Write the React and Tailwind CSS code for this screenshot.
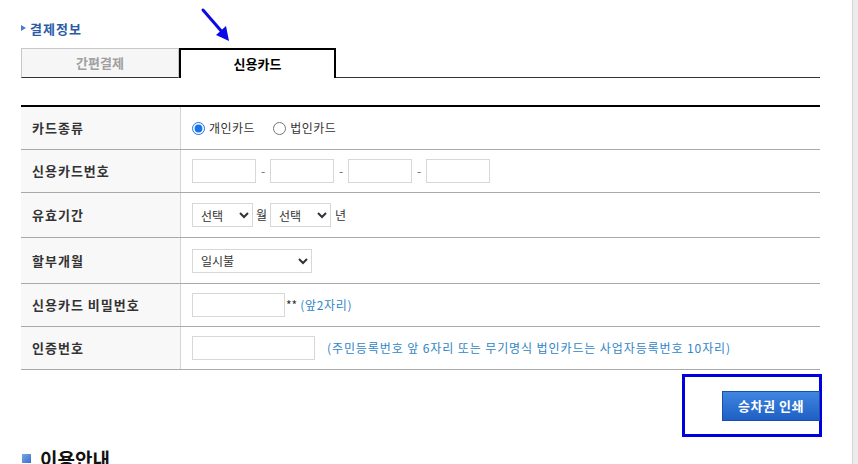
import React from "react";

const F = { fontFamily: '"Noto Sans CJK KR", "Noto Sans", sans-serif' };

function Row({ label, h, children }) {
  return (
    <div className={`flex ${h} border-b border-[#a9a9a9]`}>
      <div className="w-[160px] shrink-0 bg-[#f8f8f8] border-r border-[#d4d4d4] flex items-center pl-[11px] text-[13px] font-bold text-[#333] tracking-[1px]">
        {label}
      </div>
      <div className="flex-1 flex items-center pl-[11px] text-[12px] text-[#333]">{children}</div>
    </div>
  );
}

const inputCls = "h-[24px] border border-[#d7d7d7] bg-white outline-none";
const selectCls = "h-[24px] border border-[#d7d7d7] bg-white text-[12px] text-[#333] pl-[4px] rounded-none";

export default function App() {
  return (
    <div style={F} className="relative w-[858px] h-[464px] overflow-hidden bg-white">
      {/* scrollbar strip */}
      <div className="absolute right-0 top-0 h-full w-[6px] bg-[#ececec] border-l border-[#d8d8d8]" />

      {/* annotation arrow */}
      <svg className="absolute left-[198px] top-[6px]" width="36" height="38" viewBox="0 0 36 38">
        <line x1="5" y1="4" x2="25" y2="27" stroke="#0a0ae6" strokeWidth="3" strokeLinecap="round" />
        <polygon points="31,35 18,29 28,20" fill="#0a0ae6" />
      </svg>

      <div className="pl-[21px] w-[820px] pt-[20px]">
        {/* title */}
        <div className="flex items-center h-[16px]">
          <span className="inline-block w-0 h-0 border-y-[3.5px] border-y-transparent border-l-[5px] border-l-[#4a7bd0] mr-[4px]" />
          <span className="text-[13px] font-bold text-[#2d5aa5] leading-none tracking-[1px]">결제정보</span>
        </div>

        {/* tabs */}
        <div className="flex mt-[12px] h-[30px]">
          <div className="w-[158px] border border-[#c8c8c8] border-b-[#333] bg-[#f6f6f6] flex items-center justify-center text-[13px] font-bold text-[#a0a0a0]">
            간편결제
          </div>
          <div className="w-[157px] border-2 border-black border-b-0 bg-white flex items-center justify-center text-[13px] font-bold text-black">
            신용카드
          </div>
          <div className="flex-1 border-b border-[#333]" />
        </div>

        {/* table */}
        <div className="mt-[27px] border-t-2 border-black">
          <Row label="카드종류" h="h-[43px]">
            <label className="flex items-center">
              <input type="radio" name="ct" defaultChecked className="w-[13px] h-[13px] m-0 accent-[#1a73e8]" />
              <span className="ml-[4px] tracking-[0.5px]">개인카드</span>
            </label>
            <label className="flex items-center ml-[18px]">
              <input type="radio" name="ct" className="w-[13px] h-[13px] m-0" />
              <span className="ml-[4px] tracking-[0.5px]">법인카드</span>
            </label>
          </Row>
          <Row label="신용카드번호" h="h-[43px]">
            <input className={`${inputCls} w-[64px]`} />
            <span className="w-[14px] text-center text-[#666]">-</span>
            <input className={`${inputCls} w-[64px]`} />
            <span className="w-[14px] text-center text-[#666]">-</span>
            <input className={`${inputCls} w-[64px]`} />
            <span className="w-[14px] text-center text-[#666]">-</span>
            <input className={`${inputCls} w-[64px]`} />
          </Row>
          <Row label="유효기간" h="h-[45px]">
            <select className={`${selectCls} w-[61px]`}><option>선택</option></select>
            <span className="mx-[3px]">월</span>
            <select className={`${selectCls} w-[61px]`}><option>선택</option></select>
            <span className="ml-[4px]">년</span>
          </Row>
          <Row label="할부개월" h="h-[46px]">
            <select className={`${selectCls} w-[120px]`}><option>일시불</option></select>
          </Row>
          <Row label="신용카드 비밀번호" h="h-[43px]">
            <input className={`${inputCls} w-[93px]`} />
            <span className="ml-[1px] text-[#333]">**</span>
            <span className="ml-[3px] text-[#2f86c8] tracking-[0.7px]">(앞2자리)</span>
          </Row>
          <Row label="인증번호" h="h-[43px]">
            <input className={`${inputCls} w-[123px]`} />
            <span className="ml-[12px] text-[#2f86c8] tracking-[0.9px]">(주민등록번호 앞 6자리 또는 무기명식 법인카드는 사업자등록번호 10자리)</span>
          </Row>
        </div>

        {/* button area */}
        <div className="flex justify-end mt-[4px] -mr-[2px]">
          <div className="w-[140px] h-[63px] border-[3px] border-[#0000dd] pt-[14px] pl-[37px]">
            <button className="w-[98px] h-[30px] bg-gradient-to-b from-[#3f86e0] to-[#1f5fc4] border border-[#1a4fa8] text-white text-[13px] font-bold tracking-[0.5px]">
              승차권 인쇄
            </button>
          </div>
        </div>

        {/* section title */}
        <div className="flex items-center mt-[12px] ml-[1px]">
          <span className="inline-block w-[9px] h-[9px] bg-gradient-to-br from-[#7aa6e8] to-[#3b6fc8] mr-[9px]" />
          <span className="text-[19px] font-bold text-[#111] leading-none">이용안내</span>
        </div>
      </div>
    </div>
  );
}
